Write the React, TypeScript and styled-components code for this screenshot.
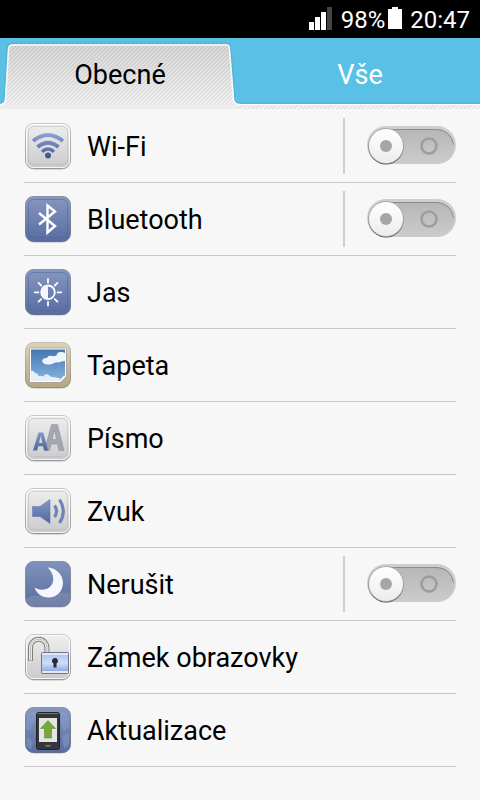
import React, { useState } from "react";
import styled, { createGlobalStyle } from "styled-components";

const GlobalStyle = createGlobalStyle`
  *, *::before, *::after { box-sizing: border-box; }
  body {
    margin: 0;
    background: #f7f7f7;
    color: #000;
    font-family: Roboto, "Noto Sans", sans-serif;
  }
`;

const Page = styled.div`
  min-height: 100vh;
  background: #f7f7f7;
`;

const StatusBar = styled.header`
  display: flex;
  align-items: center;
  justify-content: flex-end;
  height: 38px;
  padding: 2px 10px 0 0;
  background: #000;
  color: #fff;
  font-size: 24px;
  line-height: 36px;
`;

const SignalIcon = styled.svg`
  width: 23px;
  height: 23px;
  margin: 0 9px 4px 0;
`;

const BatteryIcon = styled.svg`
  width: 14px;
  height: 22px;
  margin: 0 8px 4px 3px;
`;

const TabBar = styled.nav`
  display: flex;
  position: relative;
  height: 71px;
  background: linear-gradient(#5bc0e6 0 64px, #4fb0d6 66px, #fff 66px 67px, #f0f0f0 67px);
`;

const Tab = styled.button<{ $active: boolean }>`
  position: relative;
  flex: 1;
  padding: 3px 0 0;
  border: 0;
  background: none;
  color: ${(p) => (p.$active ? "#000" : "#fff")};
  font: 400 27px/68px Roboto, "Noto Sans", sans-serif;
  cursor: pointer;
`;

const TabLabel = styled.span`
  position: relative;
`;

const TabShape = styled.svg`
  position: absolute;
  inset: 0;
  width: 100%;
  height: 71px;
  overflow: visible;
`;

const Hatch = styled.div`
  position: absolute;
  left: 0;
  right: 0;
  bottom: 0;
  height: 4px;
  background: repeating-linear-gradient(135deg, #e2e2e2 0 1px, #f4f4f4 2px 3px);
`;

const List = styled.ul`
  margin: 0;
  padding: 1px 24px 0;
  list-style: none;
`;

const Row = styled.li`
  display: flex;
  align-items: center;
  height: 73px;
  border-bottom: 1px solid #c6c6c6;
`;

const Entry = styled.a`
  display: flex;
  flex: 1;
  align-items: center;
  gap: 15px;
  height: 72px;
  color: inherit;
  font-size: 27px;
  line-height: 36px;
  text-decoration: none;
`;

const EntryLabel = styled.span`
  padding-top: 2px;
`;

const IconBox = styled.svg`
  flex: none;
  width: 48px;
  height: 48px;
`;

const SwitchArea = styled.div`
  display: flex;
  align-items: center;
  height: 56px;
  padding-left: 21px;
  border-left: 2px solid #cecece;
`;

const Switch = styled.label`
  position: relative;
  display: block;
  width: 90px;
  height: 40px;
  cursor: pointer;
`;

const SwitchInput = styled.input`
  position: absolute;
  inset: 0;
  width: 100%;
  height: 100%;
  margin: 0;
  opacity: 0;
  cursor: pointer;
`;

const SwitchArt = styled.svg`
  display: block;
  width: 90px;
  height: 40px;
  pointer-events: none;
`;

const Knob = styled.g<{ $on: boolean }>`
  transform: translateX(${(p) => (p.$on ? "50px" : "0")});
`;

const DefinitionsSvg = styled.svg`
  display: block;
  width: 0;
  height: 0;
`;

type Tone = "silver" | "blue" | "tan" | "night";

type Item = {
  label: string;
  tone: Tone;
  framed: boolean;
  art: React.ReactNode;
  toggle?: boolean;
};

const gradients: Record<string, [string, string]> = {
  silver: ["#efefef", "#cacacc"],
  silverRim: ["#c6c6c6", "#98989a"],
  blue: ["#8797c0", "#586ca2"],
  blueRim: ["#8c90a8", "#66708e"],
  night: ["#8092bc", "#5a6c9c"],
  nightRim: ["#8c90a8", "#787e98"],
  tan: ["#dcd2bf", "#b5a685"],
  tanRim: ["#c6beae", "#978c74"],
  ink: ["#8098ca", "#5168a0"],
  sky: ["#4476b2", "#86b4de"],
  track: ["#b6b6b6", "#cccccc"],
  knob: ["#ffffff", "#ececec"],
  tab: ["#cfcfcf", "#f0f0f0"],
};

const Definitions = () => (
  <DefinitionsSvg aria-hidden="true">
    <defs>
      {Object.entries(gradients).map(([id, [from, to]]) => (
        <linearGradient key={id} id={id} x1="0" y1="0" x2="0" y2="1">
          <stop offset="0" stopColor={from} />
          <stop offset="1" stopColor={to} />
        </linearGradient>
      ))}
      <linearGradient id="wave" gradientUnits="userSpaceOnUse" x1="0" y1="10" x2="0" y2="36">
        <stop offset="0" stopColor="#90a8d8" />
        <stop offset="1" stopColor="#465a90" />
      </linearGradient>
      <linearGradient id="lock" x1="0" y1="0" x2="0" y2="1">
        <stop offset="0" stopColor="#a8bce6" />
        <stop offset="0.5" stopColor="#cfdefa" />
        <stop offset="1" stopColor="#7f99d4" />
      </linearGradient>
      <pattern id="twill" width="4" height="4" patternUnits="userSpaceOnUse">
        <path d="M-1 1 1 -1M0 4 4 0M3 5 5 3" stroke="#000" strokeOpacity="0.05" strokeWidth="1" />
        <path d="M-1 3 3 -1M1 5 5 1" stroke="#fff" strokeOpacity="0.25" strokeWidth="1" />
      </pattern>
    </defs>
  </DefinitionsSvg>
);

const WifiArt = () => (
  <g fill="none" stroke="url(#wave)" strokeWidth="4">
    <path d="M9 19Q24 7 39 19" />
    <path d="M13.5 25Q24 16.500 34.500 25" />
    <path d="M18 29.800Q24 24.200 30 29.800" strokeWidth="3.400" />
    <circle cx="24" cy="33.600" r="3" fill="#465a90" stroke="none" />
  </g>
);

const BluetoothArt = () => (
  <path d="M15 18 31 31 23.500 37.500V10.500L31 16.500 15 29.500" fill="none" stroke="#fff" strokeWidth="2.400" />
);

const BrightnessArt = () => (
  <g fill="none" stroke="#fff" strokeWidth="1.800">
    <circle cx="24" cy="24.300" r="6.800" />
    <path d="M24 17.500a6.800 6.800 0 0 0 0 13.600Z" fill="#f4f6fa" stroke="none" />
    <path
      d="M24 11v3.600M24 34v3.600M10.800 24.300h3.600M33.600 24.300h3.600M14.600 14.900l2.600 2.600M30.800 31.100l2.600 2.600M14.600 33.700l2.600-2.600M30.800 17.500l2.600-2.600"
      strokeLinecap="round"
    />
  </g>
);

const WallpaperArt = () => (
  <g>
    <path d="M5.500 8q0-1 1-1H41.500q1 0 1 1V35.500l-6 6H6.500q-1 0-1-1Z" fill="#fff" stroke="#8b8371" strokeWidth="0.600" />
    <path d="M7 8.500H41V34.500Q37.500 35.500 36.500 40H7Z" fill="url(#sky)" />
    <path d="M18 20q1-3.500 5-3 1-3 5-2 2.500.300 4.500-.500.500-3.500 4-3.500 2-.500 4.500 1V20q-4 0-6 1.500-3-.500-5 .500-3 1.800-6 1.500-4 .600-6-3.500Z" fill="#f0f5fc" />
    <path d="M7 30q2.500-1 4 2 3 0 3.500 3 3-.500 5 .500 1-3 4-2 3 1 3.500 2.500 4-.500 9.500 1.500l0 2.500H7Z" fill="#e5eef9" />
  </g>
);

const FontArt = () => (
  <g fillRule="evenodd">
    <path d="M20.500 36.500 27.500 10.500h6l6.500 26h-5l-1.500-6.500h-6.400L25.500 36.500ZM28.200 25.500h4.300l-2.100-9.500Z" fill="#a4a8ae" stroke="#898d94" strokeWidth="0.500" />
    <path d="M9 36.500 14.500 18.500h4.800l4.900 18h-4.200l-1-4.200h-4.800l-1 4.200ZM15 28.900h3.400l-1.700-6.800Z" fill="url(#ink)" />
  </g>
);

const SoundArt = () => (
  <g>
    <path d="M8.500 19.500h7.500L26 12.500v24L16 29.500H8.500Z" fill="url(#ink)" stroke="#5b6fa4" strokeWidth="0.500" />
    <path d="M30.500 18.500q4 5.700 0 11.500M35.500 12.500q7.600 11.700 0 23.500" fill="none" stroke="#6e84b8" strokeWidth="3.200" />
  </g>
);

const NightArt = () => (
  <g>
    <path d="M2 39q7-5 12-3 7-3 12 1 8-6 20-4v6q0 7-6 7H8q-6 0-6-7Z" fill="#8e98b8" opacity="0.450" />
    <path d="M23.700 7.500C36 8.500 42 20 37.500 29.500C32 41 14.500 40 10.500 27.500C19 32.500 27.500 28.500 29 21.500C30 16 27.500 11 23.700 7.500Z" fill="#f4f7ff" />
  </g>
);

const LockArt = () => (
  <g>
    <path d="M6.500 28V14.500a8.200 8.200 0 0 1 16.400 0V21" fill="none" stroke="#7f7f7f" strokeWidth="5" />
    <path d="M6.500 27.500V14.500a8.200 8.200 0 0 1 16.400 0V21" fill="none" stroke="#eaeaea" strokeWidth="3" />
    <path d="M6.500 27.500V14.500a8.200 8.200 0 0 1 16.400 0V21" fill="none" stroke="#b0b0b0" strokeWidth="0.800" />
    <rect x="17.500" y="19.500" width="27" height="21" rx="1" fill="url(#lock)" stroke="#6d7690" />
    <path d="M18 21h26M18 39h26" stroke="#e4e8f0" strokeWidth="2" />
    <path d="M31 25a3 3 0 0 1 1.500 5.600V34.500h-3v-3.900A3 3 0 0 1 31 25Z" fill="#252a36" />
  </g>
);

const UpdateArt = () => (
  <g>
    <path d="M3 9q7-6 12-1l-3 7-4 4-2 6-4-2ZM36 5l8 3 1 12-5 6-3-9ZM3 31l6 5-2 8-5-5ZM38 30l7-3v11l-5 5Z" fill="#8ba2cc" opacity="0.450" />
    <rect x="12.500" y="6.500" width="23" height="37" rx="2" fill="#35363a" stroke="#222" />
    <path d="M13.500 7.500h21" stroke="#777" />
    <rect x="15" y="12" width="18" height="24" fill="#e4e6e6" />
    <path d="M24 14.500 31.500 22.500H27.500V32H20.500V22.500H16.500Z" fill="#74a83a" stroke="#5f8c2e" strokeWidth="0.600" />
    <rect x="21" y="39" width="6" height="1.600" rx="0.800" fill="#777" />
  </g>
);

const items: Item[] = [
  { label: "Wi-Fi", tone: "silver", framed: true, art: <WifiArt />, toggle: true },
  { label: "Bluetooth", tone: "blue", framed: true, art: <BluetoothArt />, toggle: true },
  { label: "Jas", tone: "blue", framed: true, art: <BrightnessArt /> },
  { label: "Tapeta", tone: "tan", framed: false, art: <WallpaperArt /> },
  { label: "Písmo", tone: "silver", framed: true, art: <FontArt /> },
  { label: "Zvuk", tone: "silver", framed: true, art: <SoundArt /> },
  { label: "Nerušit", tone: "night", framed: false, art: <NightArt />, toggle: true },
  { label: "Zámek obrazovky", tone: "silver", framed: false, art: <LockArt /> },
  { label: "Aktualizace", tone: "blue", framed: false, art: <UpdateArt /> },
];

const SettingIcon = ({ tone, framed, children }: { tone: Tone; framed: boolean; children: React.ReactNode }) => (
  <IconBox viewBox="0 0 48 48" aria-hidden="true">
    <rect x="1.500" y="2" width="45" height="46" rx="9" fill="#000" opacity="0.120" />
    <rect x="1.500" y="1.500" width="45" height="45" rx="8" fill={`url(#${tone})`} stroke={`url(#${tone}Rim)`} />
    {tone === "silver" && <rect x="2.500" y="2.500" width="43" height="43" rx="7" fill="none" stroke="#fff" strokeOpacity="0.800" />}
    {framed && (
      <rect
        x="4.500"
        y="4.500"
        width="39"
        height="38"
        rx="5"
        fill="none"
        stroke={tone === "silver" ? "#b4b4b6" : "#4f618f"}
        strokeOpacity="0.500"
      />
    )}
    {children}
  </IconBox>
);

const Toggle = ({ label }: { label: string }) => {
  const [on, setOn] = useState(false);
  return (
    <SwitchArea>
      <Switch>
        <SwitchInput type="checkbox" role="switch" aria-label={label} checked={on} onChange={() => setOn(!on)} />
        <SwitchArt viewBox="0 0 90 40" aria-hidden="true">
          <rect x="1" y="0" width="89" height="38" rx="19" fill="#cecece" />
          <rect x="2" y="3" width="86" height="35" rx="17" fill="url(#track)" />
          <path d="M13 3.500H71a17 17 0 0 1 16.500 15" fill="none" stroke="#8b8b8b" />
          <circle cx="63" cy="20" r="7.500" fill="none" stroke="#9d9d9d" strokeWidth="2.500" />
          <Knob $on={on}>
            <circle cx="20" cy="21" r="17.500" fill="#4a4a4a" />
            <circle cx="20" cy="20" r="17.500" fill="url(#knob)" stroke="#999" strokeWidth="0.800" />
            <circle cx="20" cy="20" r="6" fill="#a6a6a6" />
          </Knob>
        </SwitchArt>
      </Switch>
    </SwitchArea>
  );
};

export default function App() {
  return (
    <Page>
      <GlobalStyle />
      <Definitions />
      <StatusBar>
        <SignalIcon viewBox="0 0 23 23" aria-hidden="true">
          <path d="M0 15h5v8H0ZM6 10h5v13H6ZM12 5h5v18h-5Z" fill="#fff" />
          <path d="M18 0h5v23h-5Z" fill="#444" />
        </SignalIcon>
        <span>98%</span>
        <BatteryIcon viewBox="0 0 14 22" aria-hidden="true">
          <path d="M4 0h6v2h4v20H0V2h4Z" fill="#fff" />
        </BatteryIcon>
        <time>20:47</time>
      </StatusBar>
      <TabBar>
        <Hatch />
        <Tab type="button" $active aria-current="page">
          <TabShape viewBox="0 0 240 71" preserveAspectRatio="none" aria-hidden="true">
            <path d="M0 66Q5 66 5 61L8 11Q8 6 13 6H226Q230 6 230 11L234 61Q234 66 239 66" fill="none" stroke="#3f8fb0" strokeOpacity="0.250" strokeWidth="3" />
            <path d="M0 71V66Q5 66 5 61L8 11Q8 6 13 6H226Q230 6 230 11L234 61Q234 66 239 66V71Z" fill="url(#tab)" />
            <path d="M0 71V66Q5 66 5 61L8 11Q8 6 13 6H226Q230 6 230 11L234 61Q234 66 239 66V71Z" fill="url(#twill)" />
            <path d="M0 66.500Q5.500 66 5.500 61L8.500 11Q9 7 13 7H226Q229.500 7 229.500 11L233.500 61Q234 66.500 240 66.500" fill="none" stroke="#fff" strokeOpacity="0.850" strokeWidth="1.500" />
          </TabShape>
          <TabLabel>Obecné</TabLabel>
        </Tab>
        <Tab type="button" $active={false}>
          <TabLabel>Vše</TabLabel>
        </Tab>
      </TabBar>
      <List>
        {items.map((item) => (
          <Row key={item.label}>
            <Entry href="#">
              <SettingIcon tone={item.tone} framed={item.framed}>
                {item.art}
              </SettingIcon>
              <EntryLabel>{item.label}</EntryLabel>
            </Entry>
            {item.toggle && <Toggle label={item.label} />}
          </Row>
        ))}
      </List>
    </Page>
  );
}
